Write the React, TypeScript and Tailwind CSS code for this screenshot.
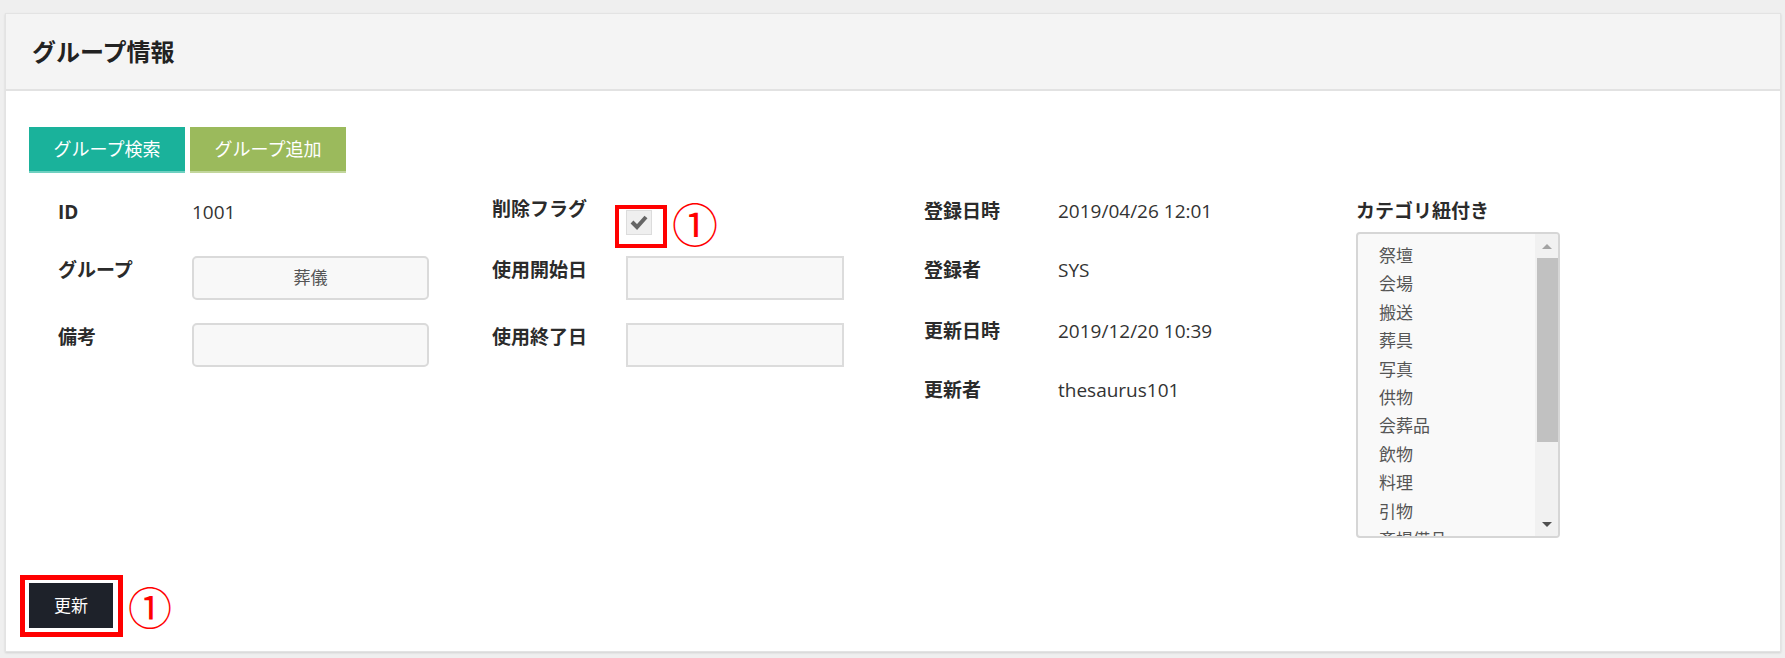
import React from "react";

const FONT = { fontFamily: '"Open Sans", "Noto Sans CJK JP", sans-serif' };

const CATEGORIES = ["祭壇", "会場", "搬送", "葬具", "写真", "供物", "会葬品", "飲物", "料理", "引物", "斎場備品"];

function Label({ children, className = "" }: { children: React.ReactNode; className?: string }) {
  return <div className={`w-[134px] shrink-0 font-bold text-[19px] text-[#2b2b2b] ${className}`}>{children}</div>;
}

function Circled({ className = "" }: { className?: string }) {
  return (
    <span
      className={`text-[#ff0000] leading-none ${className}`}
      style={{ fontFamily: '"Noto Sans CJK JP", sans-serif' }}
    >
      ①
    </span>
  );
}

export default function App() {
  return (
    <div className="w-full h-[658px] bg-[#efefef] pt-[13px] pl-[5px]" style={FONT}>
      <div className="w-[1776px] h-[639px] bg-white border border-[#e3e3e3] shadow-[0_1px_2px_rgba(0,0,0,0.12)]">
        {/* header */}
        <div className="h-[77px] bg-[#f4f4f4] border-b-2 border-[#e2e2e2] flex items-center pl-[26px]">
          <h1 className="text-[24px] font-bold text-[#222]">グループ情報</h1>
        </div>

        <div className="pl-[23px] pt-[36px]">
          {/* action buttons */}
          <div className="flex gap-[5px]">
            <button className="w-[156px] h-[46px] bg-[#1ab29b] text-white text-[18px] border-b-2 border-[#6fd0c1]">
              グループ検索
            </button>
            <button className="w-[156px] h-[46px] bg-[#9bba5c] text-white text-[18px] border-b-2 border-[#c2d69c]">
              グループ追加
            </button>
          </div>

          {/* form grid */}
          <div className="mt-[24px] ml-[29px] grid grid-cols-[434px_432px_432px_1fr]">
            {/* col 1 */}
            <div className="flex flex-col">
              <div className="h-[59px] flex items-start">
                <Label className="leading-[30px]">ID</Label>
                <div className="text-[19px] leading-[30px] text-[#333]">1001</div>
              </div>
              <div className="h-[67px] flex items-start">
                <Label className="leading-[28px]">グループ</Label>
                <div className="w-[237px] h-[44px] rounded-[5px] border-2 border-[#dadada] bg-[#f8f8f8] flex items-center justify-center text-[17px] text-[#555]">
                  葬儀
                </div>
              </div>
              <div className="h-[67px] flex items-start">
                <Label className="leading-[28px]">備考</Label>
                <div className="w-[237px] h-[44px] rounded-[5px] border-2 border-[#dadada] bg-[#f8f8f8]" />
              </div>
            </div>

            {/* col 2 */}
            <div className="flex flex-col">
              <div className="h-[59px] flex items-start">
                <Label className="leading-[24px]">削除フラグ</Label>
                <div className="flex items-center mt-[2px]">
                  <div className="relative w-[26px] h-[25px] bg-[#efefef] border border-[#dcdcdc] flex items-center justify-center">
                    <svg width="20" height="16" viewBox="0 0 20 16">
                      <polyline points="3,8 8,13 17,3" fill="none" stroke="#666666" strokeWidth="4" />
                    </svg>
                    <div className="absolute left-[-12px] top-[-6px] w-[52px] h-[43px] border-4 border-[#ff0000]" />
                  </div>
                  <Circled className="ml-[20px] text-[46px]" />
                </div>
              </div>
              <div className="h-[67px] flex items-start">
                <Label className="leading-[28px]">使用開始日</Label>
                <div className="w-[218px] h-[44px] border-2 border-[#dcdcdc] bg-[#f8f8f8]" />
              </div>
              <div className="h-[67px] flex items-start">
                <Label className="leading-[28px]">使用終了日</Label>
                <div className="w-[218px] h-[44px] border-2 border-[#dcdcdc] bg-[#f8f8f8]" />
              </div>
            </div>

            {/* col 3 */}
            <div className="flex flex-col">
              {[
                ["登録日時", "2019/04/26 12:01", "h-[59px]"],
                ["登録者", "SYS", "h-[61px]"],
                ["更新日時", "2019/12/20 10:39", "h-[59px]"],
                ["更新者", "thesaurus101", "h-[59px]"],
              ].map(([k, v, h]) => (
                <div key={k} className={`${h} flex items-start`}>
                  <Label className="leading-[28px]">{k}</Label>
                  <div className="text-[19px] leading-[28px] text-[#333]">{v}</div>
                </div>
              ))}
            </div>

            {/* col 4 */}
            <div className="flex flex-col">
              <div className="font-bold text-[19px] leading-[28px] text-[#2b2b2b]">カテゴリ紐付き</div>
              <div className="mt-[7px] w-[204px] h-[306px] rounded-[4px] border-2 border-[#d6d6d6] bg-[#f9f9f9] flex overflow-hidden">
                <div className="flex-1 pl-[21px] pt-[8px] overflow-hidden">
                  {CATEGORIES.map((c) => (
                    <div key={c} className="text-[17px] leading-[28.4px] text-[#555] whitespace-nowrap">
                      {c}
                    </div>
                  ))}
                </div>
                <div className="w-[23px] bg-[#f1f1f1] flex flex-col items-center">
                  <div className="h-[24px] flex items-center justify-center">
                    <div className="w-0 h-0 border-l-[5px] border-r-[5px] border-b-[5px] border-l-transparent border-r-transparent border-b-[#a3a3a3]" />
                  </div>
                  <div className="w-[21px] h-[184px] bg-[#c1c1c1] ml-[2px]" />
                  <div className="flex-1" />
                  <div className="h-[24px] flex items-center justify-center">
                    <div className="w-0 h-0 border-l-[5px] border-r-[5px] border-t-[5px] border-l-transparent border-r-transparent border-t-[#505050]" />
                  </div>
                </div>
              </div>
            </div>
          </div>

          {/* update */}
          <div className="mt-[45px] flex items-center">
            <div className="relative">
              <button className="w-[84px] h-[45px] bg-[#1e222a] text-white text-[17px]">更新</button>
              <div className="absolute left-[-9px] top-[-8px] w-[103px] h-[62px] border-[5px] border-[#ff0000]" />
            </div>
            <Circled className="ml-[15px] text-[44px]" />
          </div>
        </div>
      </div>
    </div>
  );
}
